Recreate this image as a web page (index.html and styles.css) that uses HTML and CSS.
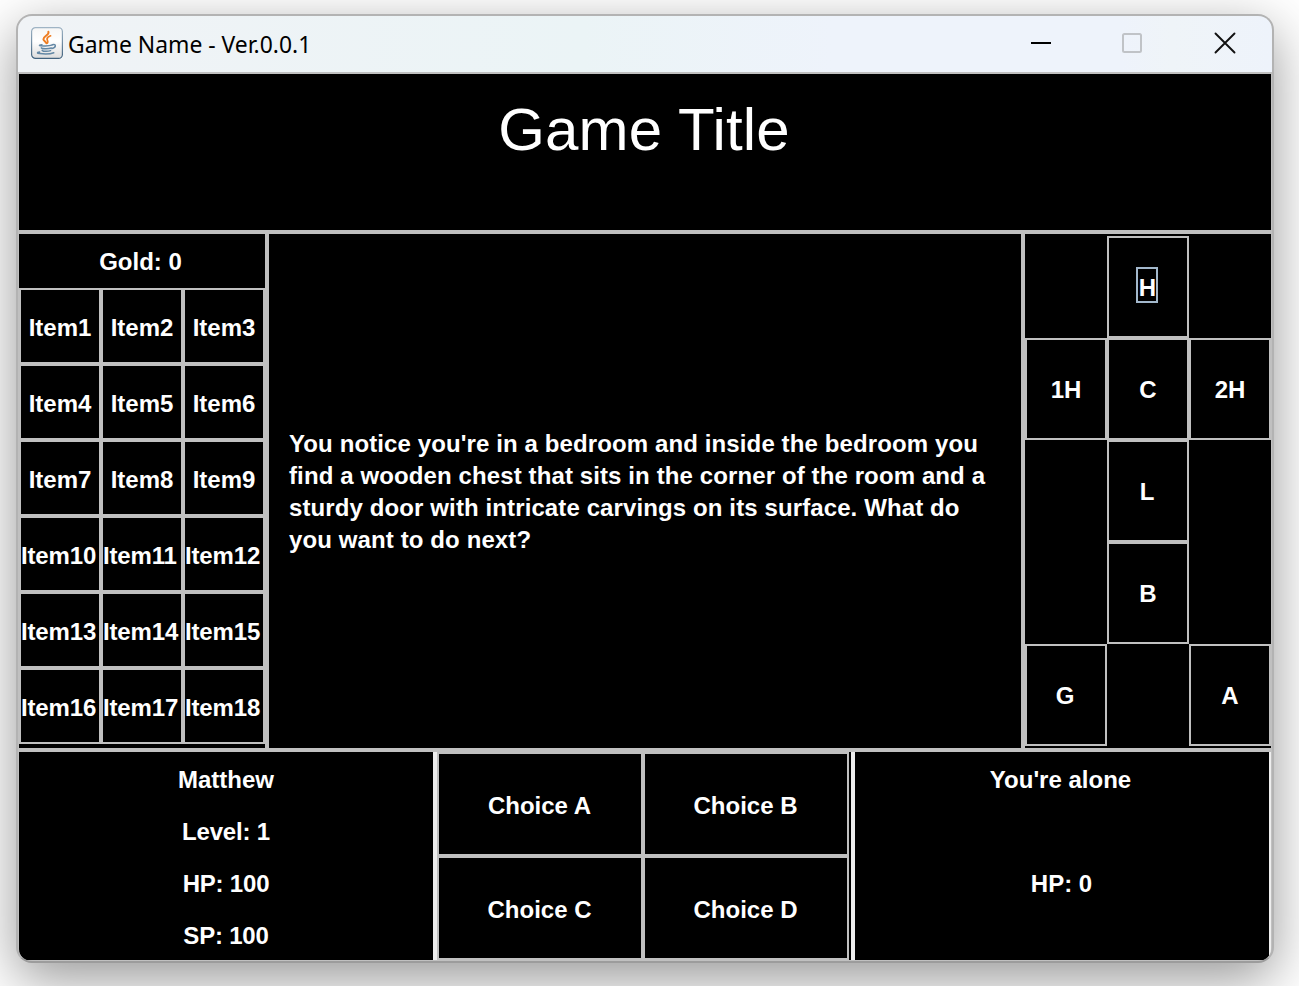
FILE: index.html
```html
<!DOCTYPE html>
<html lang="en">
<head>
<meta charset="utf-8">
<title>Game Name - Ver.0.0.1</title>
<link rel="stylesheet" href="styles.css">
</head>
<body>
<div class="window">
  <header class="titlebar">
    <svg class="app-icon" width="32" height="32" viewBox="0 0 32 32">
      <defs>
        <linearGradient id="tile" x1="0" y1="0" x2="0" y2="1"><stop offset="0" stop-color="#f6f6f6"/><stop offset=".45" stop-color="#fff"/><stop offset="1" stop-color="#dcdcdc"/></linearGradient>
        <linearGradient id="rim" x1="0" y1="0" x2="0" y2="1"><stop offset="0" stop-color="#9fb4c5"/><stop offset="1" stop-color="#42637f"/></linearGradient>
      </defs>
      <rect x=".6" y=".6" width="30.8" height="30.8" rx="4" fill="url(#tile)" stroke="url(#rim)" stroke-width="1.2"/>
      <g fill="none" stroke="#ee7d22" stroke-linecap="round">
        <path d="M17.400 4.800c1.200 3.300-5 4.300-5 7.400 0 1.500 2.400 2.300 3 4" stroke-width="2"/>
        <path d="M19.600 8.800c-2 .8-3.900 2-3.500 3.600.2 1.100 1.500 1.900.3 3.700" stroke-width="1.700"/>
      </g>
      <g fill="none" stroke="#6488a5" stroke-linecap="round">
        <path d="M11 17.600c-2.200.2-3 .7-2.400 1 1.500.7 9.600.5 12.200-.4" stroke-width="1.400"/>
        <path d="M21.300 17.700c4.300-1.100 3.900 2.800-.4 3.900" stroke-width="1.500"/>
        <path d="M10.300 20.800c.6 1.200 7.300 1.200 10 .2M11.200 23.400c1.100 1.300 6.200 1.200 8.400.2" stroke-width="1.500"/>
        <path d="M8.600 25c-3 .4-2.900 1.300.2 1.600 4.400.5 11 .3 14-.9" stroke-width="1.500"/>
      </g>
    </svg>
    <span class="caption">Game Name - Ver.0.0.1</span>
    <div class="controls">
      <svg width="22" height="22" viewBox="0 0 22 22"><path d="M1 11h20" stroke="#000" stroke-width="2"/></svg>
      <svg width="22" height="22" viewBox="0 0 22 22"><rect x="1" y="2" width="18" height="18" rx="1.500" fill="none" stroke="#c0c3c7" stroke-width="2"/></svg>
      <svg width="22" height="22" viewBox="0 0 22 22"><path d="M1.500 1.500l19 19M20.500 1.500l-19 19" stroke="#111" stroke-width="1.900" stroke-linecap="round"/></svg>
    </div>
  </header>
  <main class="game">
    <h1 class="title">Game Title</h1>
    <div class="middle">
      <section class="inventory">
        <div class="gold">Gold: 0</div>
        <div class="items">
          <button>Item1</button><button>Item2</button><button>Item3</button>
          <button>Item4</button><button>Item5</button><button>Item6</button>
          <button>Item7</button><button>Item8</button><button>Item9</button>
          <button class="wide">Item10</button><button class="wide">Item11</button><button class="wide">Item12</button>
          <button class="wide">Item13</button><button class="wide">Item14</button><button class="wide">Item15</button>
          <button class="wide">Item16</button><button class="wide">Item17</button><button class="wide">Item18</button>
        </div>
      </section>
      <section class="story">
        <p>You notice you're in a bedroom and inside the bedroom you<br>find a wooden chest that sits in the corner of the room and a<br>sturdy door with intricate carvings on its surface. What do<br>you want to do next?</p>
      </section>
      <section class="equipment">
        <i></i><button><span class="focus">H</span></button><i></i>
        <button>1H</button><button>C</button><button>2H</button>
        <i></i><button class="left">L</button><i></i>
        <i></i><button>B</button><i></i>
        <button class="left">G</button><i></i><button>A</button>
      </section>
    </div>
    <div class="bottom">
      <section class="stats">
        <div>Matthew</div><div class="tight">Level: 1</div><div class="tight">HP: 100</div><div class="tight">SP: 100</div>
      </section>
      <section class="choices">
        <button>Choice A</button><button>Choice B</button>
        <button>Choice C</button><button>Choice D</button>
      </section>
      <section class="stats enemy">
        <div>You're alone</div><div></div><div class="hp">HP: 0</div><div></div>
      </section>
    </div>
  </main>
</div>
</body>
</html>
```
FILE: styles.css
```css
* { box-sizing: border-box; }
html { height: 100%; overflow: hidden; }
body {
  margin: 0;
  height: 986px;
  padding: 14px 25px 0 16px;
  overflow: hidden;
  background: #fff;
  color: #fff;
  font: bold 24px/28px "Liberation Sans", Arial, sans-serif;
}
.window {
  width: 1258px;
  height: 949px;
  border: 2px solid #b3b3b3;
  border-bottom-color: #9c9c9c;
  border-radius: 16px;
  overflow: hidden;
  background: #c0c0c0;
  box-shadow: 0 16px 54px rgba(0, 0, 0, .41);
}
.titlebar {
  display: flex;
  align-items: center;
  height: 56px;
  padding: 0 36px 2px 13px;
  background: linear-gradient(90deg, #f0f3f6, #ebf4f6 45%, #eef3fb 65%, #eef3fb 88%, #eff4f8 92%, #eef3fb);
  color: #000;
}
.caption {
  margin-left: 5px;
  padding-top: 4px;
  font: 22.900px/30px "Noto Sans", sans-serif;
  white-space: nowrap;
}
.controls { display: flex; gap: 70px; margin-left: auto; }
.controls svg { display: block; }
.game {
  height: 888px;
  margin: 2px 1px 0;
  display: grid;
  grid-template-rows: 156px 514px 208px;
  gap: 4px;
  border-radius: 0 0 13px 13px;
  overflow: hidden;
}
.title {
  margin: 0;
  padding: 21px 2px 0 0;
  background: #000;
  text-align: center;
  font-size: 60px;
  font-weight: normal;
  letter-spacing: .15px;
  line-height: 70px;
}
.middle { display: grid; grid-template-columns: 246px 752px 246px; gap: 4px; }
.inventory, .story, .equipment, .stats { background: #000; }
.gold { height: 54px; padding: 14px 3px 0 0; text-align: center; }
.items { display: grid; grid-template-columns: repeat(3, 82px); grid-auto-rows: 76px; }
button {
  display: flex;
  align-items: center;
  justify-content: center;
  min-width: 0;
  padding: 3px 0 0;
  border: 2px solid #c0c0c0;
  border-radius: 0;
  background: #000;
  color: inherit;
  font: inherit;
  white-space: nowrap;
}
.wide { justify-content: flex-start; letter-spacing: -.15px; }
.story { display: flex; align-items: center; padding: 2px 0 0 20px; }
.story p { margin: 0; line-height: 32px; letter-spacing: .11px; white-space: nowrap; }
.equipment {
  display: grid;
  grid-template-columns: repeat(3, 82px);
  grid-auto-rows: 102px;
  align-content: start;
  padding-top: 2px;
}
.equipment button { padding: 2px 0 0; }
.equipment .left { padding-right: 2px; }
.focus {
  width: 22px;
  height: 36px;
  margin: -6px 2px 0 0;
  padding: 5px 0 0 1px;
  border: 2px solid #a3b8cc;
  display: flex;
  justify-content: center;
}
.bottom {
  display: grid;
  grid-template-columns: 414px 414px 414px;
  gap: 4px;
  padding-right: 2px;
  background: #eee;
}
.choices {
  display: grid;
  grid-template-columns: 206px 206px;
  grid-template-rows: 104px 104px;
  background: #000;
}
.choices button { padding: 3px 1px 0 0; }
.stats { display: grid; grid-template-rows: repeat(4, 52px); text-align: center; }
.stats div { padding-top: 14px; }
.stats .tight { letter-spacing: -.2px; }
.enemy div { padding-right: 3px; }
.enemy .hp { padding-right: 1px; }
```
